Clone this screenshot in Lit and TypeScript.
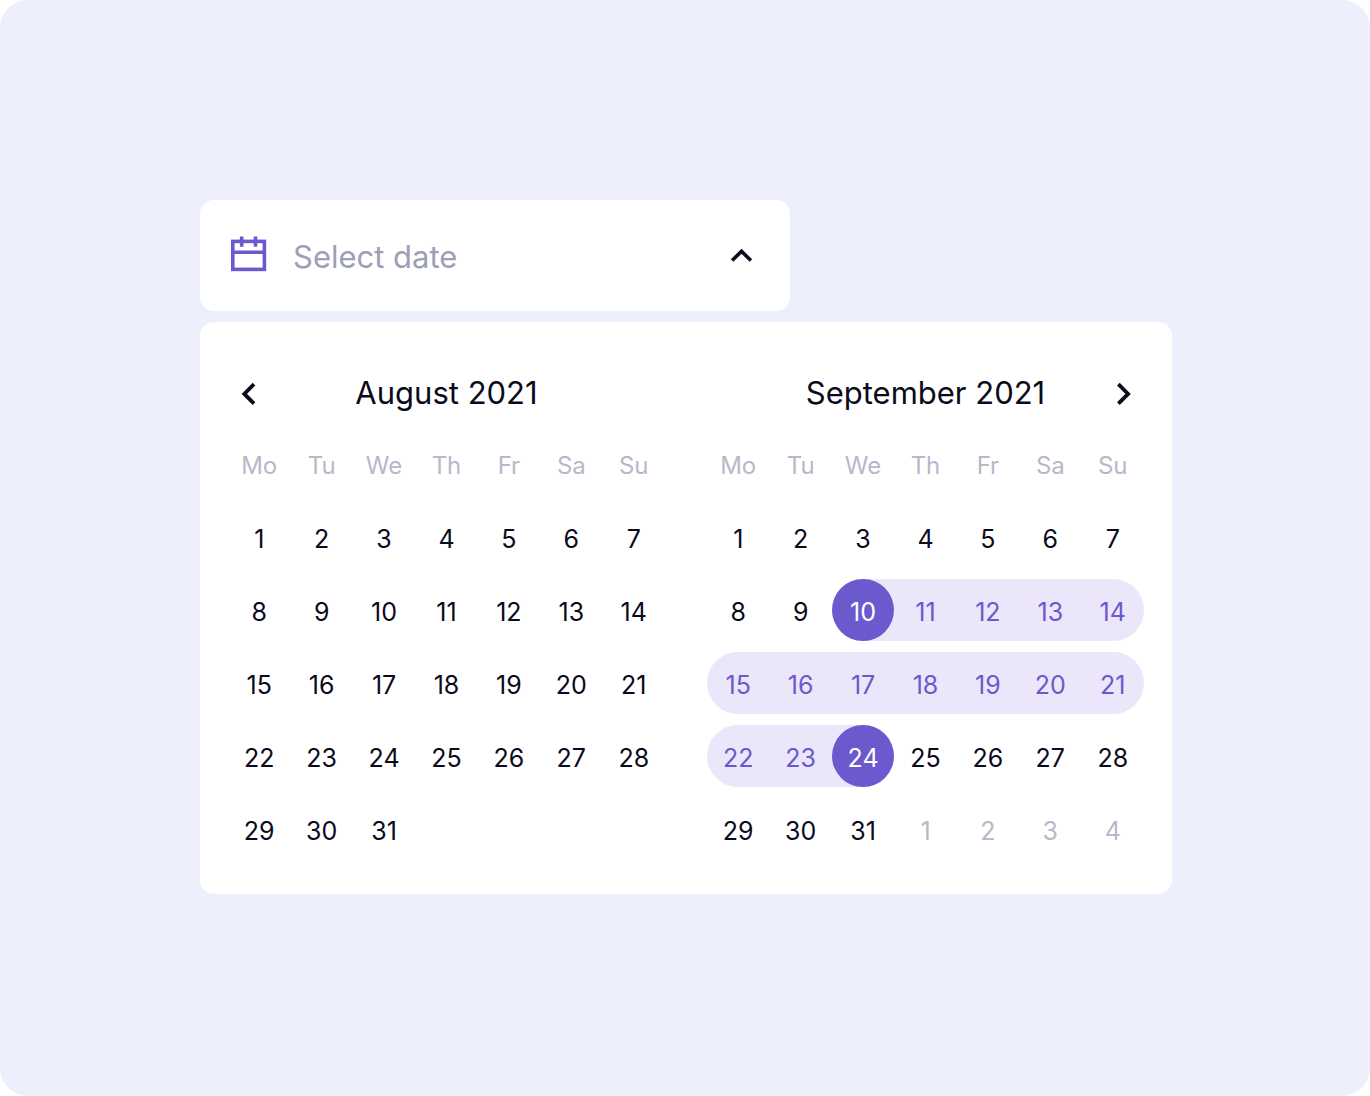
import { LitElement, html, css, nothing } from "lit";
import { customElement, property, state } from "lit/decorators.js";
import { classMap } from "lit/directives/class-map.js";

interface Month {
  name: string;
  days: number;
  trailing: number;
}

interface Cell {
  day: number;
  outside: boolean;
}

const WEEKDAYS = ["Mo", "Tu", "We", "Th", "Fr", "Sa", "Su"];

const MONTHS: Month[] = [
  { name: "August 2021", days: 31, trailing: 0 },
  { name: "September 2021", days: 31, trailing: 4 },
];

function weeksOf(month: Month): (Cell | null)[][] {
  const cells: (Cell | null)[] = [];
  for (let day = 1; day <= month.days; day++) cells.push({ day, outside: false });
  for (let day = 1; day <= month.trailing; day++) cells.push({ day, outside: true });
  while (cells.length % 7) cells.push(null);
  const weeks: (Cell | null)[][] = [];
  for (let i = 0; i < cells.length; i += 7) weeks.push(cells.slice(i, i + 7));
  return weeks;
}

@customElement("month-grid")
export class MonthGrid extends LitElement {
  @property({ attribute: false }) month: Month = MONTHS[0];
  @property({ type: Number }) start = 0;
  @property({ type: Number }) end = 0;
  @property({ type: Boolean }) previous = false;
  @property({ type: Boolean }) next = false;

  static styles = css`
    :host {
      display: block;
      min-width: 0;
    }
    .header {
      display: grid;
      grid-template-columns: 42px 1fr 42px;
      align-items: center;
      height: 72px;
    }
    .title {
      grid-column: 2;
      margin: 0;
      text-align: center;
      font-size: 31px;
      line-height: 36px;
      font-weight: 400;
    }
    button {
      margin: 0;
      padding: 0;
      border: 0;
      background: none;
      color: inherit;
      font: inherit;
      cursor: pointer;
    }
    .nav {
      display: flex;
      align-items: center;
      justify-content: center;
      height: 42px;
    }
    .nav svg {
      display: block;
      width: 24px;
      height: 24px;
    }
    .days {
      width: 100%;
      table-layout: fixed;
      border-collapse: collapse;
      font-size: 25px;
      line-height: 30px;
    }
    th,
    td {
      height: 73px;
      padding: 0;
      box-sizing: border-box;
      text-align: center;
      vertical-align: middle;
      font-weight: 400;
    }
    th {
      font-size: 24px;
    }
    td {
      padding-top: 4px;
      vertical-align: top;
    }
    th,
    .outside {
      color: #b8b8c9;
    }
    .slot {
      height: 62px;
    }
    .day {
      display: block;
      box-sizing: border-box;
      width: 100%;
      height: 100%;
      padding-top: 3px;
      border-radius: 31px;
    }
    .range {
      background: #ebe6fa;
      color: #6a5acd;
    }
    .left {
      border-top-left-radius: 31px;
      border-bottom-left-radius: 31px;
    }
    .right {
      border-top-right-radius: 31px;
      border-bottom-right-radius: 31px;
    }
    .edge {
      background: #6a5acd;
      color: #ffffff;
    }
  `;

  private pick(day: number) {
    this.dispatchEvent(new CustomEvent("pick", { detail: day }));
  }

  private renderCell(cell: Cell | null, column: number) {
    if (!cell) return html`<td></td>`;
    const { day, outside } = cell;
    const inRange = !outside && day >= this.start && day <= this.end;
    const edge = inRange && (day === this.start || day === this.end);
    const slot = {
      slot: true,
      range: inRange,
      left: column === 0 || day === this.start,
      right: column === 6 || day === this.end,
    };
    return html`<td>
      <div class=${classMap(slot)}>
        <button
          type="button"
          class=${classMap({ day: true, outside, edge })}
          aria-pressed=${inRange ? "true" : "false"}
          @click=${() => !outside && this.pick(day)}
        >${day}</button>
      </div>
    </td>`;
  }

  render() {
    return html`
      <div class="header">
        ${this.previous
          ? html`<button class="nav" type="button" aria-label="Previous month">
              <svg viewBox="0 0 24 24" fill="none" stroke="currentColor" stroke-width="3.8" aria-hidden="true">
                <path d="M17 3.2 L7.3 12.9 L17 22.6" />
              </svg>
            </button>`
          : nothing}
        <h2 class="title">${this.month.name}</h2>
        ${this.next
          ? html`<button class="nav" type="button" aria-label="Next month">
              <svg viewBox="0 0 24 24" fill="none" stroke="currentColor" stroke-width="3.8" aria-hidden="true">
                <path d="M7.4 3.2 L17.1 12.9 L7.4 22.6" />
              </svg>
            </button>`
          : nothing}
      </div>
      <table class="days" aria-label=${this.month.name}>
        <thead>
          <tr>${WEEKDAYS.map((name) => html`<th scope="col">${name}</th>`)}</tr>
        </thead>
        <tbody>
          ${weeksOf(this.month).map(
            (week) => html`<tr>${week.map((cell, i) => this.renderCell(cell, i))}</tr>`
          )}
        </tbody>
      </table>
    `;
  }
}

@customElement("app-root")
export class AppRoot extends LitElement {
  @state() private open = true;
  @state() private active = 1;
  @state() private start = 10;
  @state() private end = 24;

  static styles = css`
    :host {
      display: block;
      color: #0b0a1c;
      background: #ffffff;
      font-family: Inter, "Liberation Sans", sans-serif;
    }
    .stage {
      box-sizing: border-box;
      min-height: 100vh;
      padding: 200px 198px 200px 200px;
      border-radius: 28px;
      background: #edf0fc;
    }
    .picker {
      display: flex;
      flex-direction: column;
      gap: 11px;
      max-width: 972px;
    }
    .field {
      box-sizing: border-box;
      display: flex;
      align-items: center;
      gap: 26px;
      width: 100%;
      max-width: 590px;
      padding: 34px 28px 36px 30px;
      border-radius: 14px;
      background: #ffffff;
    }
    .icon {
      flex: none;
      display: block;
      width: 37px;
      height: 37px;
      color: #6a5acd;
    }
    .value {
      flex: 1;
      min-width: 0;
      height: 40px;
      margin: 0;
      padding: 4px 0 0;
      box-sizing: border-box;
      border: 0;
      outline: 0;
      background: none;
      color: inherit;
      font: inherit;
      font-size: 31px;
      line-height: 36px;
    }
    .value::placeholder {
      color: #9c9fb6;
      opacity: 1;
    }
    .toggle {
      flex: none;
      display: flex;
      align-items: center;
      justify-content: center;
      width: 41px;
      height: 41px;
      margin: 0;
      padding: 0;
      border: 0;
      background: none;
      color: inherit;
      cursor: pointer;
    }
    .toggle svg {
      display: block;
      width: 24px;
      height: 24px;
    }
    .closed svg {
      transform: rotate(180deg);
    }
    .panel {
      display: grid;
      grid-template-columns: 1fr 1fr;
      gap: 42px;
      padding: 35px 28px 27px;
      border-radius: 14px;
      background: #ffffff;
    }
    @media (max-width: 1200px) {
      .stage {
        padding: 48px;
      }
    }
    @media (max-width: 900px) {
      .stage {
        padding: 16px;
      }
      .panel {
        grid-template-columns: 1fr;
      }
    }
  `;

  private pick(month: number, day: number) {
    if (month === this.active && this.start === this.end && day > this.start) {
      this.end = day;
      return;
    }
    this.active = month;
    this.start = day;
    this.end = day;
  }

  render() {
    return html`
      <main class="stage">
        <div class="picker">
          <div class="field">
            <svg class="icon" viewBox="0 0 37 37" fill="none" stroke="currentColor" stroke-width="3.6" aria-hidden="true">
              <rect x="2.8" y="5.4" width="31.6" height="28" />
              <path d="M2.8 16.2 H34.4 M11.7 0.4 V10.8 M25.5 0.4 V10.8" />
            </svg>
            <input class="value" type="text" placeholder="Select date" aria-label="Select date" readonly />
            <button
              type="button"
              class=${classMap({ toggle: true, closed: !this.open })}
              aria-label="Toggle calendar"
              aria-expanded=${this.open ? "true" : "false"}
              @click=${() => (this.open = !this.open)}
            >
              <svg viewBox="0 0 24 24" fill="none" stroke="currentColor" stroke-width="3.6" aria-hidden="true">
                <path d="M2.1 17.6 L11.5 8.2 L20.9 17.6" />
              </svg>
            </button>
          </div>
          ${this.open
            ? html`<section class="panel" aria-label="Calendar">
                ${MONTHS.map(
                  (month, i) => html`<month-grid
                    .month=${month}
                    .start=${i === this.active ? this.start : 0}
                    .end=${i === this.active ? this.end : 0}
                    ?previous=${i === 0}
                    ?next=${i === MONTHS.length - 1}
                    @pick=${(e: CustomEvent<number>) => this.pick(i, e.detail)}
                  ></month-grid>`
                )}
              </section>`
            : nothing}
        </div>
      </main>
    `;
  }
}
